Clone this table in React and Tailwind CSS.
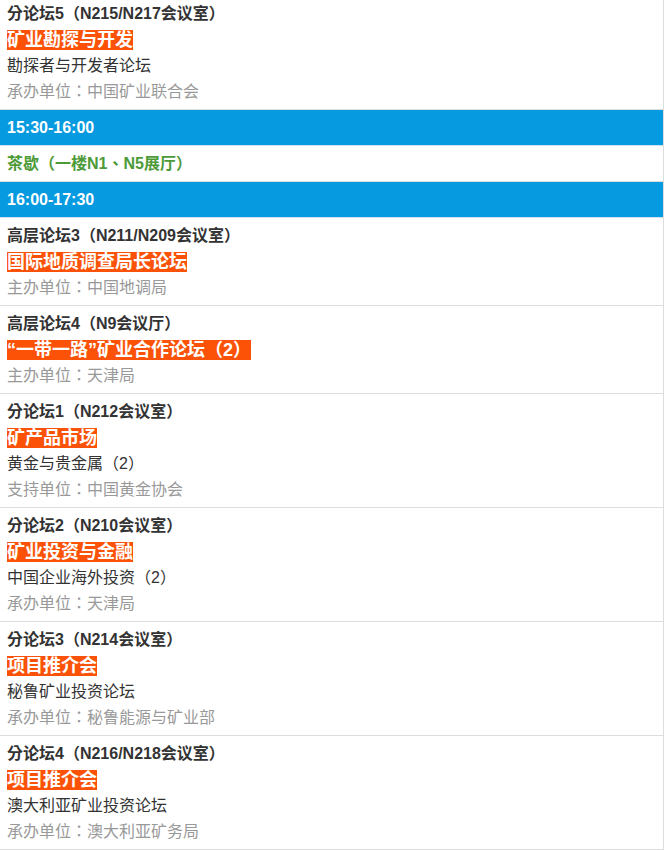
const font = { fontFamily: '"Liberation Sans", "Noto Sans CJK TC", sans-serif' };

const before = [
  {
    title: '分论坛5（N215/N217会议室）',
    topic: '矿业勘探与开发',
    sub: '勘探者与开发者论坛',
    org: '承办单位：中国矿业联合会',
  },
];

const after = [
  { title: '高层论坛3（N211/N209会议室）', topic: '国际地质调查局长论坛', org: '主办单位：中国地调局' },
  { title: '高层论坛4（N9会议厅）', topic: '“一带一路”矿业合作论坛（2）', org: '主办单位：天津局' },
  { title: '分论坛1（N212会议室）', topic: '矿产品市场', sub: '黄金与贵金属（2）', org: '支持单位：中国黄金协会' },
  { title: '分论坛2（N210会议室）', topic: '矿业投资与金融', sub: '中国企业海外投资（2）', org: '承办单位：天津局' },
  { title: '分论坛3（N214会议室）', topic: '项目推介会', sub: '秘鲁矿业投资论坛', org: '承办单位：秘鲁能源与矿业部' },
  { title: '分论坛4（N216/N218会议室）', topic: '项目推介会', sub: '澳大利亚矿业投资论坛', org: '承办单位：澳大利亚矿务局' },
];

function Session({ s }) {
  return (
    <div className="border-b border-[#dddddd] px-[7px] pt-[5px] pb-[4px] text-[16px] leading-[26px]">
      <div className="font-bold text-[#333333]">{s.title}</div>
      <div className="h-[26px] flex items-center">
        <span className="inline-block bg-[#fb5207] text-white font-bold text-[18px] leading-[20px] h-[20px]">{s.topic}</span>
      </div>
      {s.sub && <div className="text-[#333333]">{s.sub}</div>}
      <div className="text-[#999999]">{s.org}</div>
    </div>
  );
}

function TimeBar({ time }) {
  return (
    <div className="bg-[#069ae0] border-b border-[#cfe3ef] h-[36px] flex items-center px-[7px] text-white font-bold text-[16px]">
      {time}
    </div>
  );
}

export default function App() {
  return (
    <div className="w-[664px] bg-white border-r border-[#dddddd] mt-[-4px] min-h-[860px]" style={font}>
      {before.map((s, i) => (
        <Session key={i} s={s} />
      ))}
      <TimeBar time="15:30-16:00" />
      <div className="border-b border-[#dddddd] h-[36px] flex items-center px-[7px] text-[#4d9a38] font-bold text-[16px]">
        茶歇（一楼N1、N5展厅）
      </div>
      <TimeBar time="16:00-17:30" />
      {after.map((s, i) => (
        <Session key={i} s={s} />
      ))}
    </div>
  );
}
